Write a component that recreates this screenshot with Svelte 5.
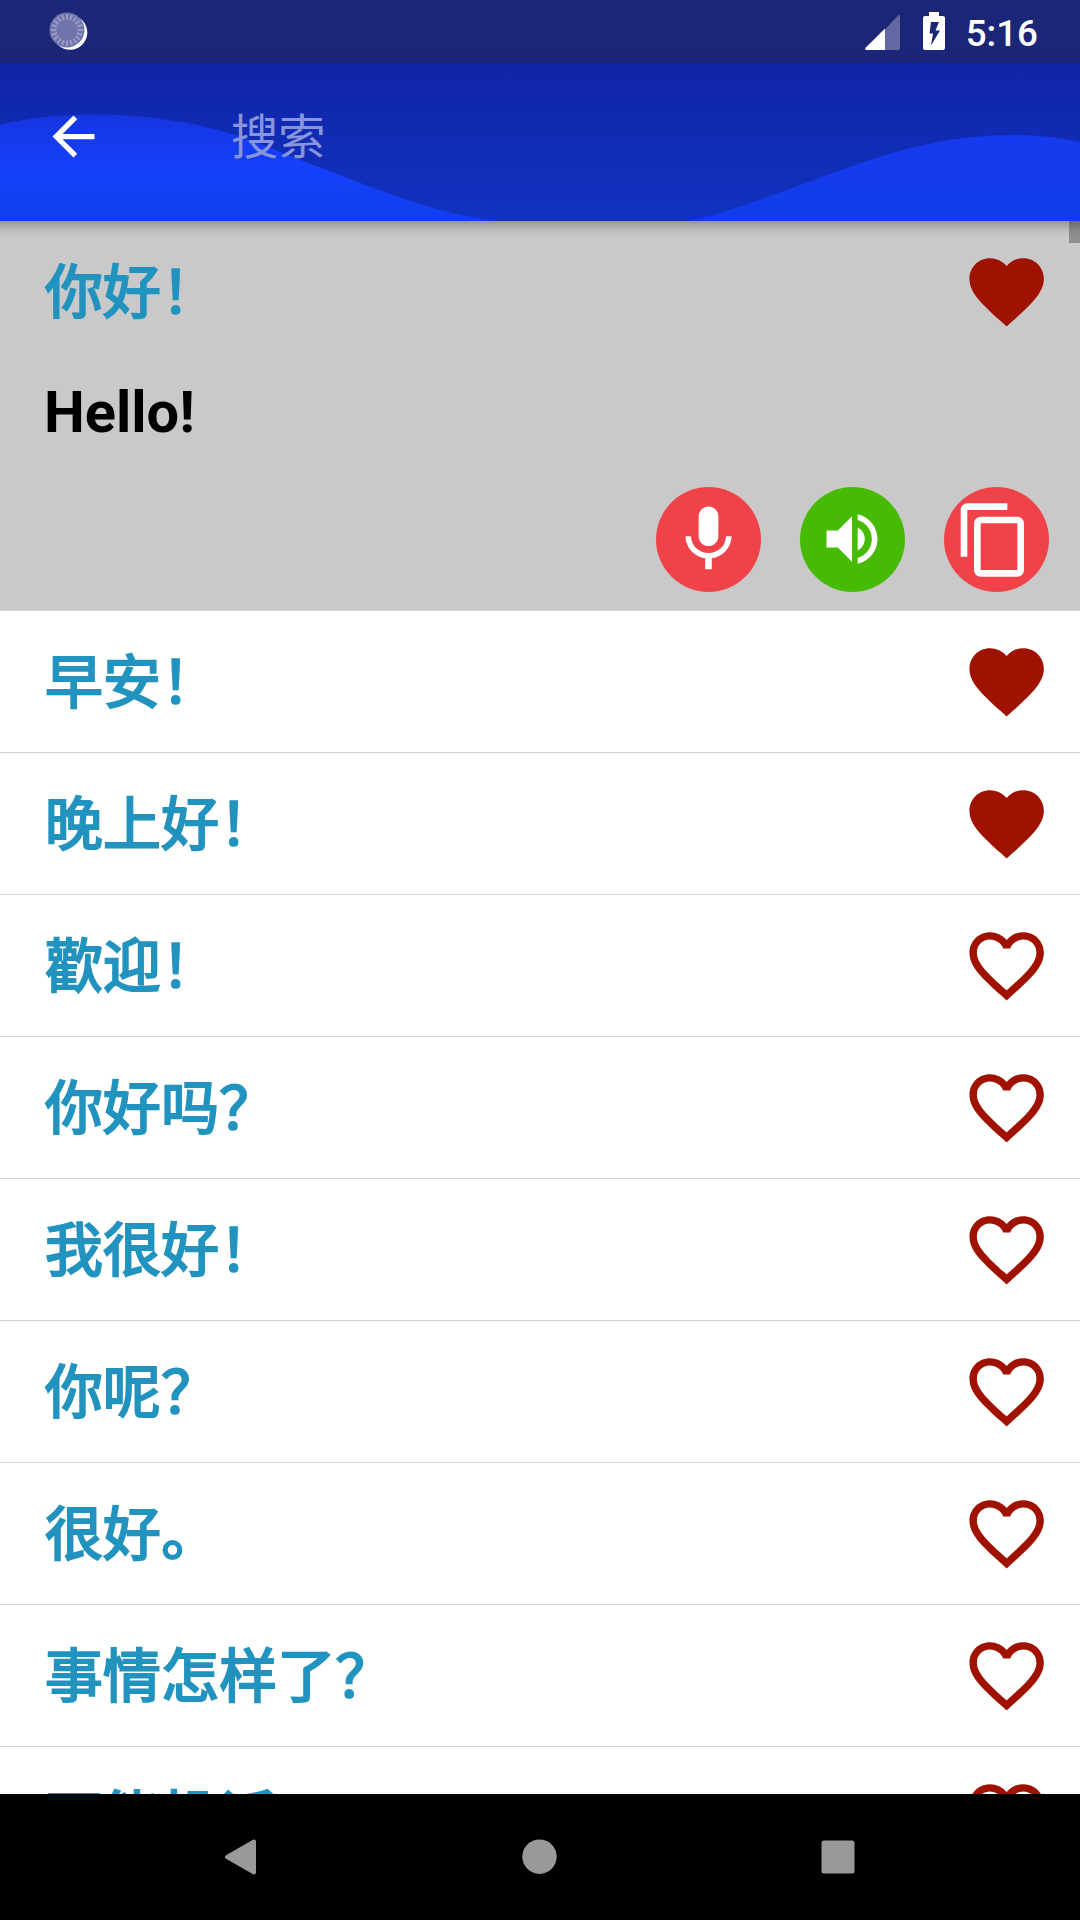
<script>
  const rows = [
    { zh: '你好！', en: 'Hello!', fav: true },
    { zh: '早安！', fav: true },
    { zh: '晚上好！', fav: true },
    { zh: '歡迎！', fav: false },
    { zh: '你好吗？', fav: false },
    { zh: '我很好！', fav: false },
    { zh: '你呢？', fav: false },
    { zh: '很好。', fav: false },
    { zh: '事情怎样了？', fav: false },
    { zh: '不能投诉。', fav: false }
  ];
  const ticks = Array.from({ length: 20 }, (_, i) => i * 18);
  const heart =
    'M12 21.35l-1.45-1.32C5.4 15.36 2 12.28 2 8.5 2 5.42 4.42 3 7.5 3c1.74 0 3.41.81 4.5 2.09C13.09 3.81 14.76 3 16.5 3 19.58 3 22 5.42 22 8.5c0 3.78-3.4 6.86-8.55 11.54L12 21.35z';
  const heartOutline =
    'M16.5 3c-1.74 0-3.41.81-4.5 2.09C10.91 3.81 9.24 3 7.5 3 4.42 3 2 5.42 2 8.5c0 3.78 3.4 6.86 8.55 11.54L12 21.35l1.45-1.32C18.6 15.36 22 12.28 22 8.5 22 5.42 19.58 3 16.5 3zm-4.4 15.55l-.1.1-.1-.1C7.14 14.24 4 11.39 4 8.5 4 6.5 5.5 5 7.5 5c1.54 0 3.04.99 3.57 2.36h1.87C13.46 5.99 14.96 5 16.5 5c2 0 3.5 1.5 3.5 3.5 0 2.89-3.14 5.74-7.9 10.05z';
</script>

<div class="screen">
  <div class="status">
    <svg class="sync" viewBox="0 0 44 44">
      <circle cx="25" cy="23.500" r="17.300" fill="#fff" />
      <circle cx="22" cy="21" r="17.500" fill="#7074ab" />
      {#each ticks as a}
        <line x1="22" y1="5" x2="22" y2="10.500" transform="rotate({a} 22 21)" stroke="#989bc6" stroke-width="2" />
      {/each}
    </svg>
    <div class="indicators">
      <svg class="signal" viewBox="0 0 35 36">
        <path d="M20 15.5 33 1.5Q35 0 35 2.500V34q0 2-2 2H20z" fill="#6268a1" />
        <path d="M20 14.500V36H2Q-1 36 .8 33.500z" fill="#fff" />
      </svg>
      <svg class="battery" viewBox="0 0 22 38">
        <path fill="#fff" fill-rule="evenodd" d="M6 0h10v4h4q2 0 2 2v30q0 2-2 2H2q-2 0-2-2V6q0-2 2-2h4zM8 10 6.500 21.500H10L8 33.500 17 18.500H12.500L16 10z" />
      </svg>
      <span class="time">5:16</span>
    </div>
  </div>

  <header>
    <svg class="waves" viewBox="0 0 1080 158" preserveAspectRatio="none">
      <defs>
        <linearGradient id="w1" x1="0" y1="0" x2="0" y2="1">
          <stop offset="0" stop-color="#1536df" />
          <stop offset=".5" stop-color="#1540fb" />
          <stop offset="1" stop-color="#113fec" />
        </linearGradient>
        <linearGradient id="w2" x1="0" y1="0" x2="0" y2="1">
          <stop offset="0" stop-color="#163aee" />
          <stop offset="1" stop-color="#113de8" />
        </linearGradient>
      </defs>
      <path fill="url(#w1)" d="M0 62C30 54 62 51.500 94 51.500 142 51.500 190 58 232 71 262 80 300 98 340 112 395 134 445 151 494 158H0z" />
      <path fill="url(#w2)" d="M690 158C740 146 790 125 850 104 905 84 955 72 1016 72 1040 72 1060 75 1080 79V158z" />
    </svg>
    <svg class="back" viewBox="0 0 24 24"><path fill="#fff" d="M20 11H7.830l5.590-5.590L12 4l-8 8 8 8 1.410-1.410L7.830 13H20v-2z" /></svg>
    <span class="search">搜索</span>
  </header>

  <main>
    {#each rows as row}
      <div class="item" class:open={row.en}>
        <div class="line">
          <span class="zh" lang="zh-CN">{row.zh}</span>
          <svg class="heart" viewBox="0 0 24 24"><path d={row.fav ? heart : heartOutline} /></svg>
        </div>
        {#if row.en}
          <div class="en">{row.en}</div>
          <div class="actions">
            <span class="btn red">
              <svg class="glyph" viewBox="0 0 24 24"><path d="M12 14c1.660 0 2.990-1.340 2.990-3L15 5c0-1.660-1.340-3-3-3S9 3.340 9 5v6c0 1.660 1.340 3 3 3zm5.300-3c0 3-2.540 5.100-5.300 5.100S6.700 14 6.700 11H5c0 3.410 2.720 6.230 6 6.720V21h2v-3.280c3.280-.48 6-3.300 6-6.720h-1.700z" /></svg>
            </span>
            <span class="btn green">
              <svg class="glyph small" viewBox="0 0 24 24"><path d="M3 9v6h4l5 5V4L7 9H3zm13.500 3c0-1.770-1.020-3.290-2.500-4.030v8.050c1.480-.73 2.500-2.250 2.500-4.020zM14 3.230v2.060c2.890.86 5 3.540 5 6.710s-2.110 5.850-5 6.710v2.060c4.010-.91 7-4.490 7-8.770s-2.990-7.860-7-8.770z" /></svg>
            </span>
            <span class="btn red copy">
              <svg class="glyph" viewBox="0 0 24 24"><path d="M16 1H4c-1.100 0-2 .9-2 2v14h2V3h12V1zm3 4H8c-1.100 0-2 .9-2 2v14c0 1.100.9 2 2 2h11c1.100 0 2-.9 2-2V7c0-1.100-.9-2-2-2zm0 16H8V7h11v14z" /></svg>
            </span>
          </div>
        {/if}
      </div>
    {/each}
    <div class="scroll"></div>
    <div class="shade"></div>
  </main>

  <nav>
    <svg viewBox="0 0 36 36"><path d="M31 2.500V33.500L4 18z" fill="#999" stroke="#999" stroke-width="4" stroke-linejoin="round" /></svg>
    <svg viewBox="0 0 36 36"><circle cx="17.500" cy="17.700" r="17.200" fill="#999" /></svg>
    <svg viewBox="0 0 36 36"><rect x="1.500" y="1.500" width="33" height="33" rx="2.500" fill="#999" /></svg>
  </nav>
</div>

<style>
  .screen {
    width: 1080px;
    height: 1920px;
    overflow: hidden;
    display: flex;
    flex-direction: column;
    background: #fff;
    font-family: Roboto, 'Noto Sans CJK SC', sans-serif;
  }
  svg {
    display: block;
    flex: none;
  }
  .status {
    height: 63px;
    flex: none;
    box-sizing: border-box;
    padding: 0 42px 0 45px;
    display: flex;
    justify-content: space-between;
    align-items: flex-start;
    background: linear-gradient(#1b2677 75%, #1c237c);
  }
  .sync {
    width: 44px;
    height: 44px;
    margin-top: 9px;
  }
  .indicators {
    display: flex;
    align-items: flex-start;
  }
  .signal {
    width: 35px;
    height: 36px;
    margin: 14px 23px 0 0;
  }
  .battery {
    width: 22px;
    height: 38px;
    margin: 12px 21px 0 0;
  }
  .time {
    margin-top: 10px;
    font-size: 36.750px;
    line-height: 48px;
    font-weight: 500;
    color: #fff;
  }
  header {
    height: 158px;
    flex: none;
    display: grid;
    align-items: center;
    grid-template-columns: 42px 63px 126px 1fr;
    background: linear-gradient(#1024a7, #1133c0);
  }
  .waves {
    grid-area: 1 / 1 / 2 / 5;
    width: 1080px;
    height: 158px;
  }
  .back {
    grid-area: 1 / 2;
    width: 63px;
    height: 63px;
    margin-bottom: 12px;
  }
  .search {
    grid-area: 1 / 4;
    font-size: 47.25px;
    line-height: 60px;
    margin-bottom: 8px;
    color: #8895dd;
  }
  main {
    flex: 1;
    min-height: 0;
    position: relative;
    overflow: hidden;
  }
  .item {
    box-sizing: border-box;
    height: 142px;
    border-bottom: 1px solid #d3d3d3;
  }
  .item.open {
    height: 390px;
    background: #c9c9c9;
  }
  .line {
    height: 141px;
    padding: 0 29px 0 45px;
    display: flex;
    align-items: center;
    justify-content: space-between;
  }
  .zh {
    font-family: 'Noto Sans CJK SC', sans-serif;
    font-size: 57.75px;
    line-height: 84px;
    margin-bottom: 7px;
    letter-spacing: 0.35px;
    color: #2293bf;
    -webkit-text-stroke: 2.2px #2293bf;
  }
  .heart {
    width: 89.300px;
    height: 89.300px;
    fill: #a01200;
  }
  .en {
    height: 68px;
    line-height: 68px;
    margin-top: 16px;
    padding-left: 44px;
    font-size: 57.75px;
    font-weight: 700;
    color: #000;
  }
  .actions {
    margin-top: 41px;
    padding-right: 31px;
    display: flex;
    justify-content: flex-end;
    gap: 39px;
  }
  .btn {
    box-sizing: border-box;
    width: 105px;
    height: 105px;
    border-radius: 50%;
    display: flex;
    align-items: center;
    justify-content: center;
  }
  .red {
    background: #f04349;
  }
  .green {
    background: #47ba04;
  }
  .copy {
    padding-right: 5px;
  }
  .glyph {
    width: 79px;
    height: 79px;
    fill: #fff;
  }
  .small {
    width: 68px;
    height: 68px;
    margin: 0 1px 1px 0;
  }
  .copy .glyph {
    width: 80px;
    height: 80px;
  }
  .scroll {
    position: absolute;
    top: 0;
    right: 0;
    width: 11px;
    height: 22px;
    background: #909090;
  }
  .shade {
    position: absolute;
    inset: 0 0 auto 0;
    height: 16px;
    background: linear-gradient(rgba(0, 0, 0, 0.25), rgba(0, 0, 0, 0.07) 55%, transparent);
  }
  nav {
    height: 126px;
    flex: none;
    box-sizing: border-box;
    padding: 0 224px 0 223px;
    display: flex;
    align-items: center;
    justify-content: space-between;
    background: #000;
  }
  nav svg {
    width: 36px;
    height: 36px;
  }
</style>
